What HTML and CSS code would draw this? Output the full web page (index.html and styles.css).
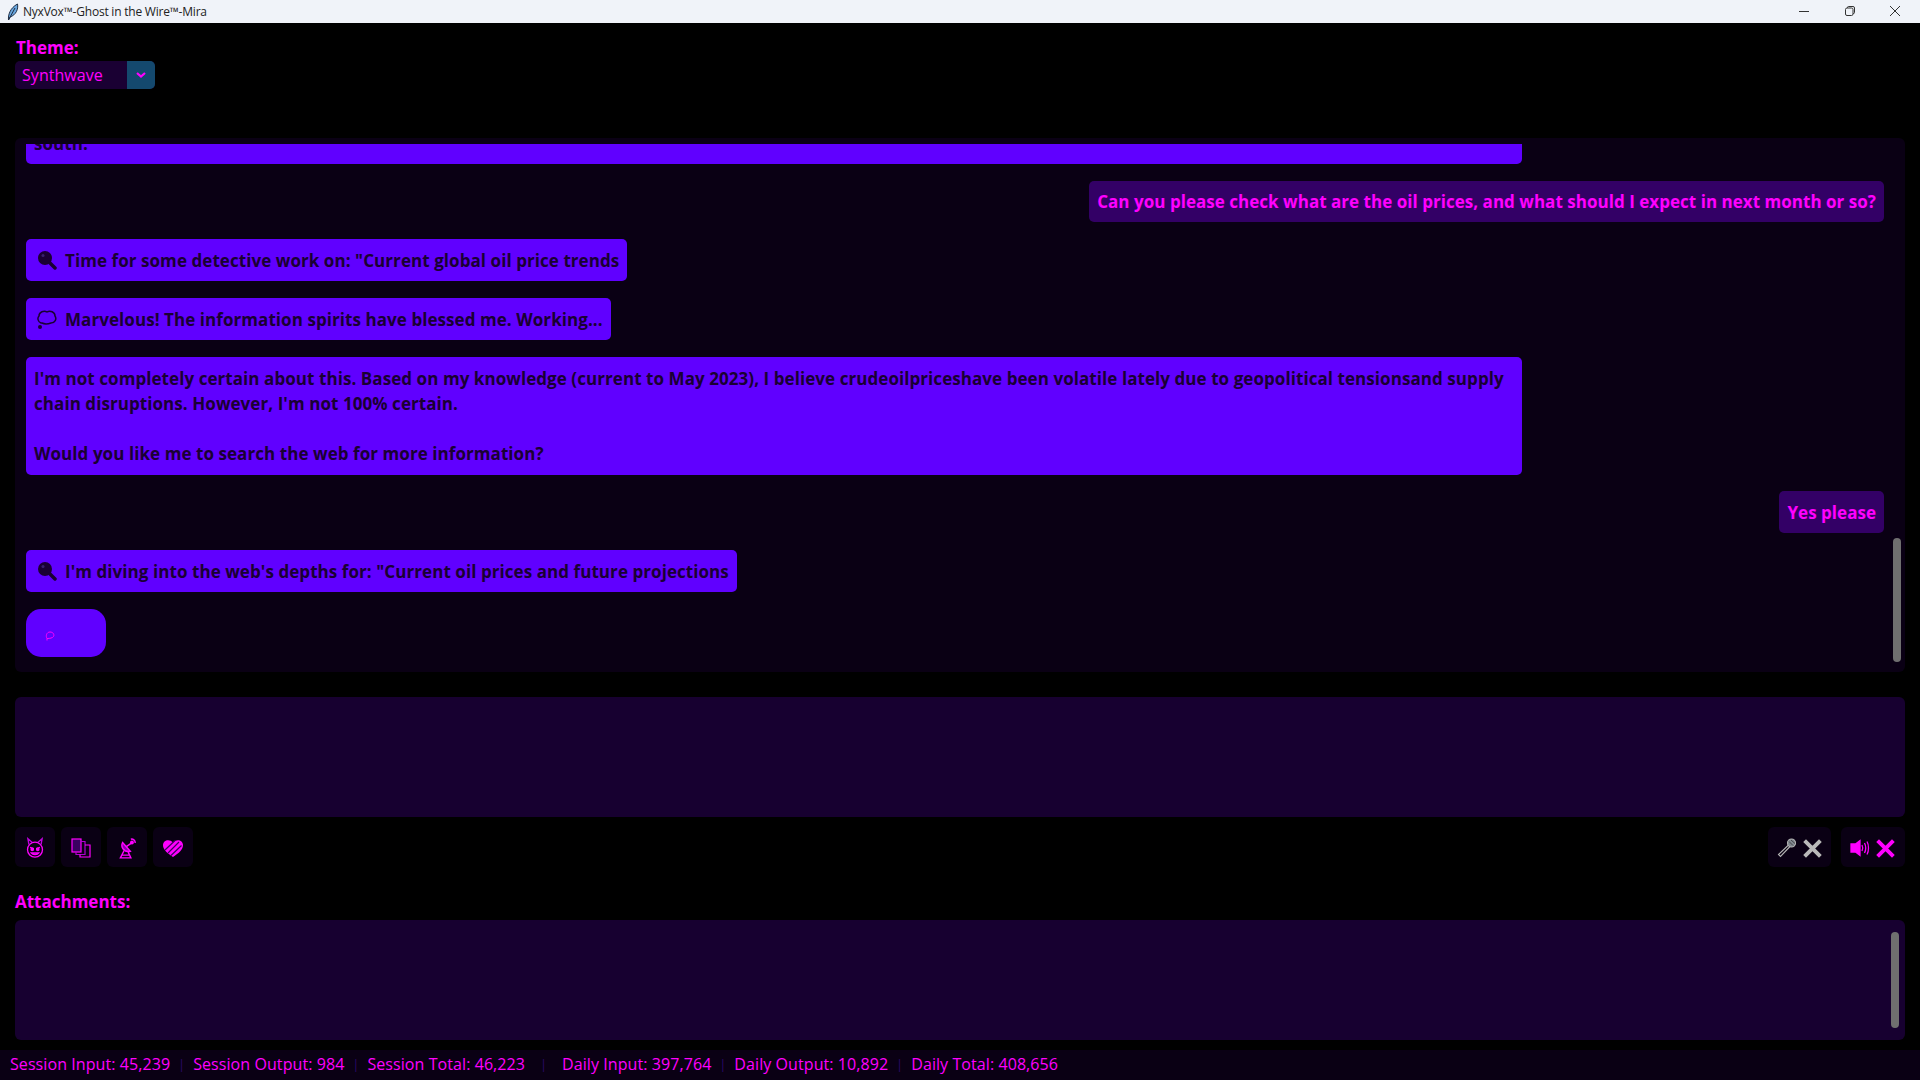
FILE: index.html
```html
<!DOCTYPE html>
<html lang="en">
<head>
<meta charset="utf-8">
<title>NyxVox-Ghost in the Wire-Mira</title>
<link rel="stylesheet" href="styles.css">
</head>
<body>
<header class="titlebar">
  <svg class="feather" viewBox="0 0 12 18" width="12" height="18"><path d="M1.500 17C1 12 3 5 10.500 1C11.500 6 9 12 3 14Z" fill="#6aa8e0" stroke="#1c2c44" stroke-width="1"/><path d="M1.500 17L8 5" stroke="#1c2c44" stroke-width="1" fill="none"/></svg>
  <span class="title-text">NyxVox™-Ghost in the Wire™-Mira</span>
  <div class="window-controls">
    <svg viewBox="0 0 12 12" width="12" height="12"><path d="M1 6.500H11" stroke="#333" stroke-width="1"/></svg>
    <svg viewBox="0 0 12 12" width="12" height="12"><rect x="1.500" y="3" width="7.500" height="7.500" rx="1.500" fill="none" stroke="#333"/><path d="M3.500 3V2.500A1 1 0 0 1 4.500 1.500H9A1.500 1.500 0 0 1 10.500 3V7.500A1 1 0 0 1 9.500 8.500H9" fill="none" stroke="#333"/></svg>
    <svg viewBox="0 0 12 12" width="12" height="12"><path d="M1 1L11 11M11 1L1 11" stroke="#333" stroke-width="1"/></svg>
  </div>
</header>

<main class="app">
  <div class="theme">
    <label class="label">Theme:</label>
    <div class="select">
      <span class="select-value">Synthwave</span>
      <span class="select-btn"><svg viewBox="0 0 10 6" width="10" height="6"><path d="M1 1L5 4.500L9 1" fill="none" stroke="#ff00ff" stroke-width="2.200"/></svg></span>
    </div>
  </div>

  <section class="chat">
    <div class="scroller">
      <div class="msg bot wide clipped">south:</div>
      <div class="msg user short">Can you please check what are the oil prices, and what should I expect in next month or so?</div>
      <div class="msg bot">
        <svg class="ico" viewBox="0 0 20 20"><circle cx="8" cy="8" r="7" fill="#1a0033"/><circle cx="6" cy="5.500" r="1.500" fill="#3a2070"/><path d="M13 13L18 18" stroke="#1a0033" stroke-width="3.500" stroke-linecap="round"/></svg>
        <span>Time for some detective work on: "Current global oil price trends</span>
      </div>
      <div class="msg bot">
        <svg class="ico" viewBox="0 0 20 20"><path d="M4 14C1 13 0 9 2 7C2 3 7 1 10 3C13 1 18 3 18 7C20 10 18 14 14 14C11 15 7 15 5 14Z" fill="none" stroke="#1a0033" stroke-width="1.500"/><circle cx="3" cy="18" r="2" fill="#1a0033"/></svg>
        <span>Marvelous! The information spirits have blessed me. Working...</span>
      </div>
      <div class="msg bot wide long">I'm not completely certain about this. Based on my knowledge (current to May 2023), I believe crudeoilpriceshave been volatile lately due to geopolitical tensionsand supply chain disruptions. However, I'm not 100% certain.<br><br>Would you like me to search the web for more information?</div>
      <div class="msg user">Yes please</div>
      <div class="msg bot">
        <svg class="ico" viewBox="0 0 20 20"><circle cx="8" cy="8" r="7" fill="#1a0033"/><circle cx="6" cy="5.500" r="1.500" fill="#3a2070"/><path d="M13 13L18 18" stroke="#1a0033" stroke-width="3.500" stroke-linecap="round"/></svg>
        <span>I'm diving into the web's depths for: "Current oil prices and future projections</span>
      </div>
      <div class="typing">
        <svg viewBox="0 0 10 10" width="10" height="10"><path d="M2 7.500C0.500 5 1.500 1 5 1C8.500 1 9.500 4 8.500 5.500C7.500 7 5 7.500 2 7.500V9.500" fill="none" stroke="#ff00ff" stroke-width="1"/></svg>
      </div>
    </div>
    <div class="scrollbar chat-thumb"></div>
  </section>

  <div class="input-box"></div>

  <div class="toolbar">
    <button class="tool">
      <svg class="nudge-left" viewBox="0 0 20 20" width="22" height="22" fill="none" stroke="#ff00ff" stroke-width="1.200"><circle cx="10" cy="11.500" r="6.800"/><path d="M4.500 7L3.500 1.500L7.500 5M15.500 7L16.500 1.500L12.500 5" stroke="#c000e0"/><path d="M5.500 9.500L9 10.500M14.500 9.500L11 10.500"/><circle cx="7.500" cy="11.200" r="1.100" fill="#ff00ff"/><circle cx="12.500" cy="11.200" r="1.100" fill="#ff00ff"/><path d="M6.500 14.500C8 16.500 12 16.500 13.500 14.500Z" fill="#a000c0"/></svg>
    </button>
    <button class="tool">
      <svg viewBox="0 0 20 20" width="20" height="20" fill="none" stroke="#ff00ff" stroke-width="1.200"><rect x="1" y="1" width="9" height="13" fill="#3a0060"/><path d="M10 3.500H14V16.500H5V14" stroke="#b000d0"/><path d="M14 7H19V19H9V16.500"/></svg>
    </button>
    <button class="tool">
      <svg viewBox="0 0 20 20" width="22" height="22" fill="none" stroke="#ff00ff" stroke-width="1.300"><path d="M6 5C4 9 7 14 13 13Z" fill="#8a00b0"/><path d="M9 9L14 5.500"/><circle cx="14.500" cy="5" r="1.100" fill="#ff00ff"/><path d="M13.500 2C15.500 1.500 17.500 3 17.500 5.500"/><path d="M7.500 12L4 19H13.500L11 13.500M5 16.500H12.500"/></svg>
    </button>
    <button class="tool">
      <svg viewBox="0 0 22 20" width="22" height="20"><path d="M11 19C5 15 1 11.500 1 7C1 2.500 7 0 11 4.500C15 0 21 2.500 21 7C21 11.500 17 15 11 19Z" fill="#ff00ff"/><path d="M3 12L13 2.500M6 15L17 4M9 17.500L19.500 7.500" stroke="#3a0060" stroke-width="1.200"/></svg>
    </button>
    <div class="spacer"></div>
    <button class="tool group mic">
      <svg viewBox="0 0 20 20" width="20" height="20" fill="none" stroke="#b4b4b4" stroke-width="1.100"><path d="M11.500 7L1.500 16.500L3.500 18.500L13 8.500"/><circle cx="14.500" cy="5" r="4" fill="#808890"/><path d="M12 3.500L16 7.500M14 2L18 5.500" stroke="#333" stroke-width=".8"/></svg>
      <svg viewBox="0 0 20 20" width="21" height="21"><path d="M2.500 2.500L17.500 17.500M17.500 2.500L2.500 17.500" stroke="#b9b9b9" stroke-width="3.700"/></svg>
    </button>
    <button class="tool group spk">
      <svg viewBox="0 0 20 20" width="20" height="20" fill="none" stroke="#ff00ff" stroke-width="1.300"><path d="M1 6H5.500L10 2.500V17.500L5.500 14H1Z" fill="#ff00ff"/><path d="M12 7C13 9 13 11 12 13M14.500 5C16 8 16 12 14.500 15M17 3.500C19 7 19 13 17 16.500"/></svg>
      <svg viewBox="0 0 20 20" width="21" height="21"><path d="M2.500 2.500L17.500 17.500M17.500 2.500L2.500 17.500" stroke="#ff00ff" stroke-width="3.700"/></svg>
    </button>
  </div>

  <label class="label attach-label">Attachments:</label>
  <section class="attachments"><div class="scrollbar attach-thumb"></div></section>
</main>

<footer class="status">
  <span>Session Input: 45,239</span><i>|</i>
  <span>Session Output: 984</span><i>|</i>
  <span>Session Total: 46,223</span><i class="wide-sep">|</i>
  <span>Daily Input: 397,764</span><i>|</i>
  <span>Daily Output: 10,892</span><i>|</i>
  <span>Daily Total: 408,656</span>
</footer>
</body>
</html>
```
FILE: styles.css
```css
* { box-sizing: border-box; }
html, body { margin: 0; height: 100%; }
body {
  width: 1920px; height: 1080px; overflow: hidden;
  background: #000; color: #ff00ff;
  font-family: "Open Sans", "Noto Sans", sans-serif;
  display: flex; flex-direction: column;
}
.titlebar {
  height: 23px; flex: none; background: #f0f3f9; color: #222;
  display: flex; align-items: center; padding-left: 7px;
}
.feather { flex: none; }
.title-text { margin-left: 4px; font-size: 12px; letter-spacing: -0.22px; }
.window-controls { margin-left: auto; display: flex; gap: 33.500px; padding: 0 19px 2px 0; align-items: center; }
.app { flex: 1; padding: 0 15px; display: flex; flex-direction: column; }
.theme { height: 115px; flex: none; padding-top: 12px; }
.theme .label { margin-bottom: 1px; }
.label { display: block; font-weight: 700; font-size: 17px; line-height: 25px; padding-left: 1px; }
.select {
  width: 140px; height: 28px; background: #1a0033; border-radius: 5px; overflow: hidden;
  display: flex; justify-content: space-between; align-items: center;
}
.select-value { padding-left: 7px; font-size: 16px; letter-spacing: .05px; }
.select-btn { width: 28px; height: 28px; background: #14496e; display: flex; align-items: center; justify-content: center; }
.chat {
  position: relative; height: 534px; flex: none; padding: 6px 10px 0 11px;
  background: #0a0014; border-radius: 6px;
}
.scroller { height: 100%; overflow: hidden; display: flex; flex-direction: column; gap: 17px; align-items: flex-start; }
.msg {
  flex: none; padding: 8.500px 8px; line-height: 25px; font-size: 17px; font-weight: 700; border-radius: 5px;
  letter-spacing: .065px;
  display: flex; align-items: center; gap: 8px;
}
.msg.wide { width: 1496px; display: block; }
.msg.long { margin-bottom: -1px; padding-bottom: 9.500px; }
.msg.short { padding-top: 8px; padding-bottom: 8px; }
.bot { background: #6000ff; color: #1a0033; }
.user { background: #330066; color: #ff00ff; align-self: flex-end; margin-right: 11px; letter-spacing: .03px; }
.clipped { margin-top: -22px; height: 42px; }
.ico { width: 20px; height: 20px; flex: none; margin-left: 3px; }
.typing {
  flex: none; width: 80px; height: 48px; background: #6000ff; border-radius: 15px;
  padding: 22px 0 0 19px; line-height: 0;
}
.scrollbar { position: absolute; width: 8px; background: #6f6f6f; border-radius: 4px; }
.chat-thumb { right: 4px; top: 400px; height: 124px; }
.input-box { height: 120px; flex: none; margin-top: 25px; background: #170030; border-radius: 6px; }
.toolbar { flex: none; display: flex; gap: 6px; margin-top: 10px; height: 40px; }
.tool {
  width: 40px; height: 40px; padding: 2px 0 0; border: 0; background: #0a0014; border-radius: 6px;
  display: flex; align-items: center; justify-content: center;
}
.nudge-left { margin-right: 1px; }
.spacer { flex: 1; }
.group { gap: 5px; }
.mic { width: 63px; }
.spk { width: 64px; margin-left: 4px; }
.attach-label { margin-top: 22px; height: 25px; padding-left: 0; }
.attachments { position: relative; height: 120px; flex: none; margin-top: 6px; background: #170030; border-radius: 6px; }
.attach-thumb { right: 6px; top: 12px; height: 96px; }
.status {
  height: 30px; flex: none; background: #0a0014; padding: 0 0 2px 10px;
  display: flex; align-items: center; font-size: 16px; color: #ff00ff; letter-spacing: .08px;
}
.status i { font-style: normal; color: #2a0a66; width: 23px; text-align: center; font-size: 13px; }
.status i.wide-sep { width: 37px; }
```
